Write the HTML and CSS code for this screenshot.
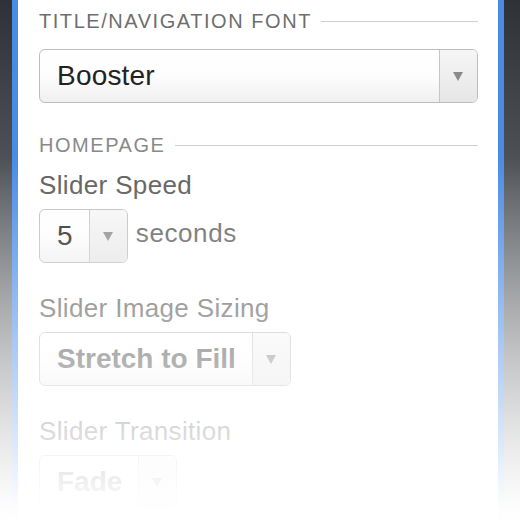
FILE: index.html
```html
<!DOCTYPE html>
<html lang="en">
  <head>
    <meta charset="UTF-8" />
    <meta name="viewport" content="width=device-width, initial-scale=1.0" />
    <title>Theme Settings</title>
    <link rel="stylesheet" href="styles.css">
  </head>
  <body>
    <div class="panel">
      <!-- Fonts -->
      <div class="section-title">Title/Navigation Font</div>
      <div class="select select-full">
        <span class="select-value">Booster</span>
        <span class="select-arrow"></span>
      </div>

      <!-- Homepage -->
      <div class="section-title section-gap">Homepage</div>

      <div class="field-label">Slider Speed</div>
      <div class="inline-row">
        <div class="select">
          <span class="select-value">5</span>
          <span class="select-arrow"></span>
        </div>
        <span class="unit">seconds</span>
      </div>

      <div class="field-label field-gap">Slider Image Sizing</div>
      <div class="select">
        <span class="select-value bold">Stretch to Fill</span>
        <span class="select-arrow"></span>
      </div>

      <div class="field-label field-gap">Slider Transition</div>
      <div class="select">
        <span class="select-value bold">Fade</span>
        <span class="select-arrow"></span>
      </div>
    </div>

    <!-- white fade over the lower half -->
    <div class="fade-out"></div>
  </body>
</html>
```

FILE: styles.css
```css
/* Page frame */
body {
  margin: 0;
  height: 522px;
  overflow: hidden;
  position: relative;
  font-family: "Liberation Sans", Arial, sans-serif;
  background: linear-gradient(to bottom, #2e3237 0%, #5c6064 45%, #9a9c9e 100%);
}

.panel {
  box-sizing: border-box;
  width: 492px;
  min-height: 522px;
  margin-left: 12px;
  padding: 9px 20px 0 21px;
  background: #fff;
  border-left: 6px solid #4a8be6;
  border-right: 6px solid #4a8be6;
}

/* Section headings with rule */
.section-title {
  display: flex;
  align-items: center;
  font-size: 20px;
  line-height: 24px;
  letter-spacing: 1.55px;
  text-transform: uppercase;
  color: #6e6e6e;
}

.section-title::after {
  content: "";
  flex: 1;
  height: 1px;
  margin-left: 9px;
  background: #cfcfcf;
}

.section-gap {
  margin-top: 30px;
  color: #898989;
}

/* Labels */
.field-label {
  font-size: 26px;
  line-height: 30px;
  letter-spacing: 0.35px;
  color: #5a5a5a;
  margin-top: 13px;
  margin-bottom: 9px;
}

.field-gap {
  margin-top: 30px;
}

/* Select boxes */
.select {
  box-sizing: border-box;
  display: inline-flex;
  height: 54px;
  border: 1px solid #bdbdbd;
  border-radius: 6px;
  overflow: hidden;
  background: linear-gradient(to bottom, #ffffff 0%, #fdfdfd 50%, #f0f0f0 100%);
  vertical-align: top;
}

.select-full {
  display: flex;
  margin-top: 16px;
}

.select-value {
  flex: 1;
  display: flex;
  align-items: center;
  padding: 0 16px 0 17px;
  font-size: 28px;
  line-height: 32px;
  letter-spacing: 0.2px;
  color: #222;
}

.select-value.bold {
  font-weight: bold;
  letter-spacing: 0;
  color: #4a4a4a;
}

.select-arrow {
  position: relative;
  width: 37px;
  border-left: 1px solid #c6c6c6;
  background: linear-gradient(to bottom, #f6f6f6 0%, #e6e6e6 100%);
}

.select-arrow::after {
  content: "";
  position: absolute;
  left: 13px;
  top: 22px;
  border-left: 5px solid transparent;
  border-right: 5px solid transparent;
  border-top: 9px solid #8a8a8a;
}

/* Speed row */
.inline-row {
  display: flex;
  align-items: center;
}

.unit {
  margin-left: 8px;
  margin-bottom: 6px;
  font-size: 26px;
  line-height: 30px;
  letter-spacing: 0.6px;
  color: #5e5e5e;
}

/* Fade overlay */
.fade-out {
  position: absolute;
  inset: 0;
  pointer-events: none;
  background: linear-gradient(to bottom, rgba(255, 255, 255, 0) 30%, rgba(255, 255, 255, 0.97) 96%, #fff 100%);
}
```
